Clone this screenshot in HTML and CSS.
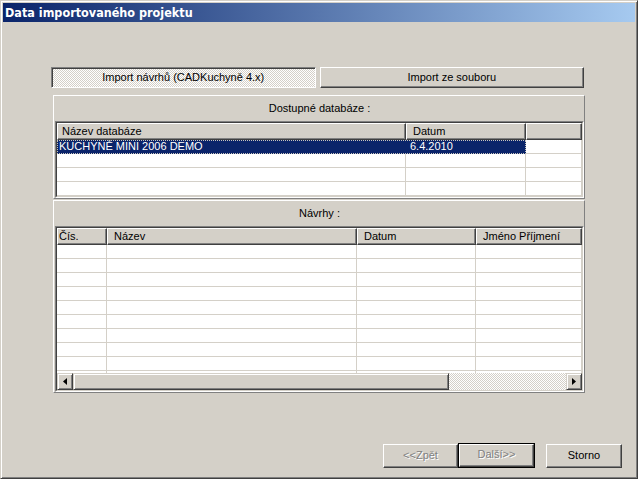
FILE: index.html
```html
<!DOCTYPE html>
<html>
<head>
<meta charset="utf-8">
<title>Data importovaného projektu</title>
<link rel="stylesheet" href="styles.css">
</head>
<body>
<div class="window">
  <div class="titlebar">Data importovaného projektu</div>
  <div class="client">
    <div class="main">
      <div class="tabs">
        <div class="tab pressed">Import návrhů (CADKuchyně 4.x)</div>
        <div class="tab">Import ze souboru</div>
      </div>

      <div class="panel p1">
        <div class="panel-head">Dostupné databáze :</div>
        <div class="sunken">
          <div class="sunken-in">
            <div class="ghead g1cols">
              <div class="hc">Název databáze</div>
              <div class="hc hc-wide">Datum</div>
              <div class="hc"></div>
            </div>
            <div class="gbody b1">
              <div class="row selrow">
                <div class="hl g1sel">
                  <div class="c">KUCHYNĚ MINI 2006 DEMO</div>
                  <div class="c">6.4.2010</div>
                </div>
                <div class="c"></div>
              </div>
              <div class="row g1cols"><div class="c"></div><div class="c"></div><div class="c"></div></div>
              <div class="row g1cols"><div class="c"></div><div class="c"></div><div class="c"></div></div>
              <div class="row g1cols"><div class="c"></div><div class="c"></div><div class="c"></div></div>
            </div>
          </div>
        </div>
      </div>

      <div class="panel p2">
        <div class="panel-head">Návrhy :</div>
        <div class="sunken">
          <div class="sunken-in">
            <div class="ghead g2cols">
              <div class="hc hc-tight">Čís.</div>
              <div class="hc hc-wide">Název</div>
              <div class="hc hc-wide">Datum</div>
              <div class="hc hc-wide">Jméno Příjmení</div>
            </div>
            <div class="gbody b2">
              <div class="row g2cols"><div class="c"></div><div class="c"></div><div class="c"></div><div class="c"></div></div>
              <div class="row g2cols"><div class="c"></div><div class="c"></div><div class="c"></div><div class="c"></div></div>
              <div class="row g2cols"><div class="c"></div><div class="c"></div><div class="c"></div><div class="c"></div></div>
              <div class="row g2cols"><div class="c"></div><div class="c"></div><div class="c"></div><div class="c"></div></div>
              <div class="row g2cols"><div class="c"></div><div class="c"></div><div class="c"></div><div class="c"></div></div>
              <div class="row g2cols"><div class="c"></div><div class="c"></div><div class="c"></div><div class="c"></div></div>
              <div class="row g2cols"><div class="c"></div><div class="c"></div><div class="c"></div><div class="c"></div></div>
              <div class="row g2cols"><div class="c"></div><div class="c"></div><div class="c"></div><div class="c"></div></div>
              <div class="row g2cols"><div class="c"></div><div class="c"></div><div class="c"></div><div class="c"></div></div>
              <div class="row g2cols"><div class="c"></div><div class="c"></div><div class="c"></div><div class="c"></div></div>
            </div>
            <div class="hscroll">
              <div class="sbtn">
                <svg width="4" height="7" viewBox="0 0 4 7"><path d="M4 0 L4 7 L0 3.5 Z" fill="#000"/></svg>
              </div>
              <div class="thumb"></div>
              <div class="track"></div>
              <div class="sbtn">
                <svg width="4" height="7" viewBox="0 0 4 7"><path d="M0 0 L0 7 L4 3.5 Z" fill="#000"/></svg>
              </div>
            </div>
          </div>
        </div>
      </div>
    </div>

    <div class="buttons">
      <div class="btn disabled">&lt;&lt;Zpět</div>
      <div class="btn default disabled"><div class="btn-in">Další&gt;&gt;</div></div>
      <div class="btn storno">Storno</div>
    </div>
  </div>
</div>
</body>
</html>
```

FILE: styles.css
```css
* { box-sizing: border-box; }
html, body { margin: 0; padding: 0; }
body {
  background: #d4d0c8;
  font-family: "Liberation Sans", Arial, sans-serif;
  font-size: 11px;
  color: #000;
}

.window {
  width: 638px;
  height: 479px;
  border: 1px solid;
  border-color: #d4d0c8 #404040 #404040 #d4d0c8;
  box-shadow: inset 1px 1px #fff, inset -1px -1px #808080;
  padding: 2px;
  display: flex;
  flex-direction: column;
  background: #d4d0c8;
}

.titlebar {
  flex: none;
  height: 19px;
  background: linear-gradient(to right, #0a246a, #a6caf0);
  color: #fff;
  font-family: "DejaVu Sans Condensed", "DejaVu Sans", sans-serif;
  font-weight: bold;
  font-size: 12.5px;
  line-height: 19px;
  padding-left: 2px;
  white-space: nowrap;
}

.client {
  flex: 1;
  display: flex;
  flex-direction: column;
  padding: 45px 0 8px 0;
}

.main {
  margin: 0 50px;
  display: flex;
  flex-direction: column;
}

/* tabs */
.tabs {
  display: grid;
  grid-template-columns: 1fr 1fr;
  gap: 4px;
  height: 21px;
  margin: 0 1px 0 -2px;
}
.tab {
  border: 1px solid;
  border-color: #fff #404040 #404040 #fff;
  box-shadow: inset -1px -1px #808080;
  background: #d4d0c8;
  text-align: center;
  line-height: 19px;
  white-space: nowrap;
}
.tab.pressed {
  border-color: #808080 #fff #fff #808080;
  box-shadow: inset 1px 1px #404040;
  background: repeating-conic-gradient(#fff 0 25%, #d4d0c8 0 50%) 0 0 / 2px 2px;
}

/* panels */
.panel {
  border: 1px solid;
  border-color: #fff #808080 #808080 #fff;
  padding: 0 0 0 1px;
  display: flex;
  flex-direction: column;
}
.p1 { margin-top: 7px; }
.p2 { margin-top: 1px; }
.panel-head {
  height: 25px;
  line-height: 25px;
  text-align: center;
}

.sunken {
  border: 1px solid;
  border-color: #808080 #fff #fff #808080;
}
.sunken-in {
  border: 1px solid;
  border-color: #404040 #d4d0c8 #d4d0c8 #404040;
  background: #fff;
  display: flex;
  flex-direction: column;
}

.ghead {
  height: 17px;
  display: grid;
  background: #d4d0c8;
}
.hc {
  border: 1px solid;
  border-color: #fff #404040 #404040 #fff;
  box-shadow: inset -1px -1px #808080;
  line-height: 14px;
  padding-left: 4px;
  white-space: nowrap;
  overflow: hidden;
}
.hc-wide { padding-left: 6px; }
.hc-tight { padding-left: 1px; }

.g1cols { grid-template-columns: 349px 120px 1fr; }
.g2cols { grid-template-columns: 50px 250px 119px 1fr; }

.gbody { display: flex; flex-direction: column; overflow: hidden; }
.b1 { height: 56px; }
.b2 { height: 128px; }

.row {
  display: grid;
  height: 14px;
  flex: none;
}
.c {
  border-right: 1px solid #d4d0c8;
  border-bottom: 1px solid #d4d0c8;
  line-height: 13px;
  padding-left: 3px;
  white-space: nowrap;
  overflow: hidden;
}

.selrow { grid-template-columns: 469px 1fr; }
.hl {
  display: grid;
  grid-template-columns: 349px 120px;
  background: #0a246a;
  color: #fff;
  outline: 1px dotted #c8c4bc;
  outline-offset: -1px;
}
.hl .c {
  border-right-color: #0a246a;
  border-bottom-color: #0a246a;
  padding-left: 2px;
}
.hl .c + .c { padding-left: 4px; }

/* scrollbar */
.hscroll {
  height: 17px;
  display: flex;
  background: #d4d0c8;
}
.sbtn, .thumb {
  border: 1px solid;
  border-color: #d4d0c8 #404040 #404040 #d4d0c8;
  box-shadow: inset 1px 1px #fff, inset -1px -1px #808080;
  background: #d4d0c8;
}
.sbtn {
  width: 16px;
  display: flex;
  align-items: center;
  justify-content: center;
  flex: none;
}
.thumb { width: 376px; flex: none; }
.track {
  flex: 1;
  background: repeating-conic-gradient(#fff 0 25%, #d4d0c8 0 50%) 0 0 / 2px 2px;
}

/* buttons */
.buttons {
  margin-top: auto;
  display: flex;
  justify-content: flex-end;
  align-items: center;
  padding-right: 13px;
}
.btn {
  width: 75px;
  height: 24px;
  border: 1px solid;
  border-color: #fff #404040 #404040 #fff;
  box-shadow: inset -1px -1px #808080;
  background: #d4d0c8;
  text-align: center;
  line-height: 21px;
}
.btn.default {
  width: 77px;
  height: 25px;
  border: 1px solid #000;
  box-shadow: none;
  padding: 0;
}
.btn-in {
  height: 100%;
  border: 1px solid;
  border-color: #fff #404040 #404040 #fff;
  box-shadow: inset -1px -1px #808080;
  line-height: 19px;
}
.btn.disabled {
  color: #808080;
  text-shadow: 1px 1px 0 #fff;
}
.btn.storno { width: 76px; margin-left: 11px; }
```
